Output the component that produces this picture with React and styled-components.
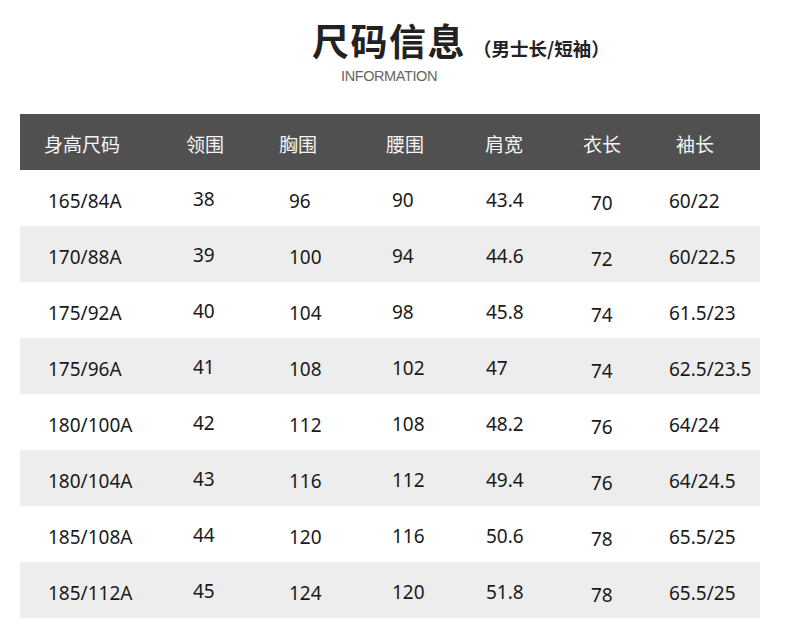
import React from 'react'
import styled, { createGlobalStyle } from 'styled-components'

const GlobalStyle = createGlobalStyle`
  html, body { margin: 0; padding: 0; background: #fff; }
  body { font-family: "Noto Sans", "Noto Sans CJK SC", sans-serif; }
`

// column width, header text offset, data text offset
const cols = [
  { w: 160, h: 24, d: 28 },
  { w: 95, h: 6, d: 13 },
  { w: 105, h: 4, d: 14 },
  { w: 100, h: 6, d: 12 },
  { w: 98, h: 5, d: 6 },
  { w: 87, h: 5, d: 13 },
  { w: 95, h: 11, d: 4 },
]

const heads = ['身高尺码', '领围', '胸围', '腰围', '肩宽', '衣长', '袖长']

const rows = [
  ['165/84A', '38', '96', '90', '43.4', '70', '60/22'],
  ['170/88A', '39', '100', '94', '44.6', '72', '60/22.5'],
  ['175/92A', '40', '104', '98', '45.8', '74', '61.5/23'],
  ['175/96A', '41', '108', '102', '47', '74', '62.5/23.5'],
  ['180/100A', '42', '112', '108', '48.2', '76', '64/24'],
  ['180/104A', '43', '116', '112', '49.4', '76', '64/24.5'],
  ['185/108A', '44', '120', '116', '50.6', '78', '65.5/25'],
  ['185/112A', '45', '124', '120', '51.8', '78', '65.5/25'],
]

// small vertical nudges seen in the picture
const nudge = [0, -2, 0, -1, -1, 2, 0]

export default function App() {
  return (
    <Page>
      <GlobalStyle />
      <TitleBlock>
        <TitleLine>
          <Title>尺码信息</Title>
          <Sub>（男士长/短袖）</Sub>
        </TitleLine>
        <Eng>INFORMATION</Eng>
      </TitleBlock>
      <Table>
        <HeadRow>
          {heads.map((h, i) => (
            <HeadCell key={h} $w={cols[i].w} $pad={cols[i].h}>{h}</HeadCell>
          ))}
        </HeadRow>
        {rows.map((r, ri) => (
          <Row key={ri} $grey={ri % 2 === 1}>
            {r.map((v, i) => (
              <Cell key={i} $w={cols[i].w} $pad={cols[i].d} $dy={nudge[i]}>{v}</Cell>
            ))}
          </Row>
        ))}
      </Table>
    </Page>
  )
}

const Page = styled.div`
  width: 790px;
  height: 641px;
  padding: 0 0 0 20px;
  box-sizing: border-box;
  overflow: hidden;
`

const TitleBlock = styled.div`
  height: 114px;
`

const TitleLine = styled.div`
  display: flex;
  align-items: baseline;
  padding: 14px 0 0 292px;
`

const Title = styled.h1`
  margin: 0;
  font-family: "Noto Sans CJK SC", sans-serif;
  font-size: 37px;
  font-weight: 700;
  color: #222;
  letter-spacing: 1.5px;
  line-height: 52px;
`

const Sub = styled.span`
  font-family: "Noto Sans CJK SC", sans-serif;
  font-size: 18.5px;
  font-weight: 700;
  color: #222;
  margin-left: 7px;
`

const Eng = styled.div`
  padding-left: 321px;
  margin-top: 2px;
  font-family: "Liberation Sans", sans-serif;
  font-size: 14.5px;
  color: #666;
  letter-spacing: -0.4px;
`

const Table = styled.div`
  width: 740px;
  display: flex;
  flex-direction: column;
`

const HeadRow = styled.div`
  display: flex;
  height: 56px;
  align-items: center;
  background: #505050;
`

const HeadCell = styled.div`
  width: ${p => p.$w}px;
  padding-left: ${p => p.$pad}px;
  box-sizing: border-box;
  font-family: "Noto Sans CJK SC", sans-serif;
  font-size: 19px;
  color: #f4f4f4;
  white-space: nowrap;
  position: relative;
  top: 1px;
`

const Row = styled.div`
  display: flex;
  height: 56px;
  align-items: center;
  background: ${p => (p.$grey ? '#ededed' : '#fff')};
`

const Cell = styled.div`
  width: ${p => p.$w}px;
  padding-left: ${p => p.$pad}px;
  box-sizing: border-box;
  font-size: 19px;
  color: #1a1a1a;
  white-space: nowrap;
  position: relative;
  top: ${p => p.$dy + 3}px;
`
